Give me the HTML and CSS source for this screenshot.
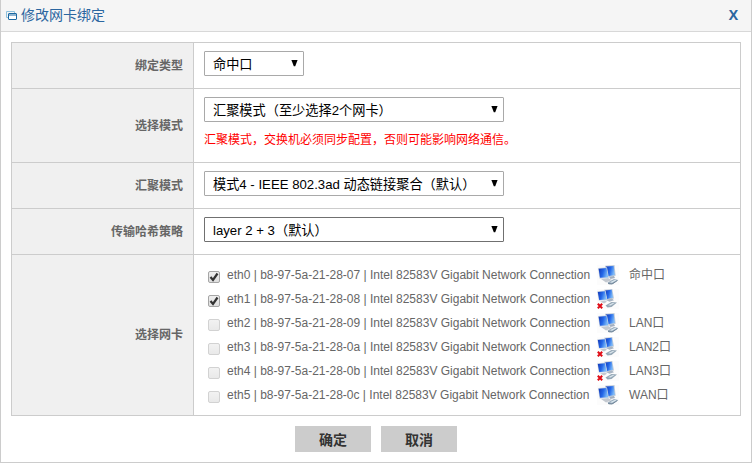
FILE: index.html
```html
<!DOCTYPE html>
<html lang="zh-CN">
<head>
<meta charset="utf-8">
<title>修改网卡绑定</title>
<link rel="stylesheet" href="styles.css">
</head>
<body>
<svg class="defs" aria-hidden="true">
  <defs>
    <linearGradient id="screen" x1="0" y1="0" x2="1" y2="0.3">
      <stop offset="0" stop-color="#1238b8"/><stop offset="0.55" stop-color="#2468e8"/><stop offset="1" stop-color="#7ab8f8"/>
    </linearGradient>
    <symbol id="pc" viewBox="0 0 22 20">
      <rect width="22" height="20" fill="#fcfcfc"/>
      <path d="M4 14l7-1 4 2-6 2.500z" fill="#c4c9d0"/>
      <path d="M8 .8l9.500-.7 1.200 10.700-8 1.500z" fill="#c3ccd8"/>
      <path d="M8.800 1.500l7.900-.6 1.100 9-7.500 1.400z" fill="url(#screen)"/>
      <path d="M1 3l9-.8 2 11-9.500.6z" fill="#cdd7e4"/>
      <path d="M1.600 3.700l7.900-.7 1.700 9.300-8.200.4z" fill="url(#screen)"/>
      <path d="M12 11.800l5-.9 1 2-4.500 1.200z" fill="#a3afbf"/>
      <path d="M10.500 17.500l6.500-3.500 4 1-5 4-4 .3z" fill="#98abbc"/>
      <path d="M13 17.200l5-2.500 1.500.5-4.500 2.500z" fill="#dbe8ef"/>
      <path d="M11 18.500l4 .5 5.500-3.500" fill="none" stroke="#6d8295" stroke-width=".9"/>
    </symbol>
    <symbol id="pc-off" viewBox="0 0 22 20">
      <rect width="22" height="20" fill="#fcfcfc"/>
      <path d="M7 .8l8.300-.7 1.700 9.400-7 1.500z" fill="#c3ccd8"/>
      <path d="M8 1.400l6.700-.6 1.300 7.900-6.200 1.200z" fill="url(#screen)"/>
      <path d="M.2 2.300l8.300-.7 1.900 9.600-8.600.6z" fill="#cdd7e4"/>
      <path d="M.8 2.900l7.200-.6 1.600 8.200-7.400.4z" fill="url(#screen)"/>
      <path d="M3 12.500l5-1 2 1.300-3 1.700z" fill="#c4c9d0"/>
      <path d="M9 11l6-1.500 2 1.700-4.500 1.500z" fill="#a9b5c4"/>
      <path d="M8.500 16.500l6-3.500 5.500.5-5.500 4.500-4 .5z" fill="#94a7b6"/>
      <path d="M11 16.200l4.500-2.200 2 .2-4 2.300z" fill="#dbe6ed"/>
      <path d="M.8 14.800l4.400 4.400M5.200 14.800l-4.400 4.400" stroke="#e00c16" stroke-width="2"/>
    </symbol>
    <symbol id="arrow" viewBox="0 0 7 8"><path d="M.4 1h6.200L4.200 7.200H2.800z" fill="#000"/></symbol>
  </defs>
</svg>
<div class="dialog">
  <header class="bar">
    <svg class="bar-icon" width="12" height="10" viewBox="0 0 12 10" fill="none">
      <path d="M8.500 2V.5h-8v6H2" stroke="#8fc1dc"/>
      <rect x="2.500" y="2.500" width="8" height="6" rx=".5" fill="#fff" stroke="#1b69a3"/>
      <path d="M2 4h9" stroke="#1b69a3"/>
    </svg>
    <h1>修改网卡绑定</h1>
    <span class="close">X</span>
  </header>
  <div class="form">
    <div class="row short"><div class="label">绑定类型</div><div class="field">
      <div class="select narrow"><span>命中口</span><svg><use href="#arrow"/></svg></div></div></div>
    <div class="row tall"><div class="label">选择模式</div><div class="field">
      <div class="select"><span>汇聚模式（至少选择2个网卡）</span><svg><use href="#arrow"/></svg></div>
      <p class="hint">汇聚模式，交换机必须同步配置，否则可能影响网络通信。</p></div></div>
    <div class="row short"><div class="label">汇聚模式</div><div class="field">
      <div class="select"><span>模式4 - IEEE 802.3ad 动态链接聚合（默认）</span><svg><use href="#arrow"/></svg></div></div></div>
    <div class="row short"><div class="label">传输哈希策略</div><div class="field">
      <div class="select dark"><span>layer 2 + 3（默认）</span><svg><use href="#arrow"/></svg></div></div></div>
    <div class="row cards"><div class="label">选择网卡</div><div class="field">
      <div class="nic"><i class="box on"><svg viewBox="0 0 12 12"><path d="M2.500 6l2.500 3L9.500 2.500"/></svg></i><span class="name">eth0 | b8-97-5a-21-28-07 | Intel 82583V Gigabit Network Connection</span><svg class="pc"><use href="#pc"/></svg><span class="port">命中口</span></div>
      <div class="nic"><i class="box on"><svg viewBox="0 0 12 12"><path d="M2.500 6l2.500 3L9.500 2.500"/></svg></i><span class="name">eth1 | b8-97-5a-21-28-08 | Intel 82583V Gigabit Network Connection</span><svg class="pc"><use href="#pc-off"/></svg></div>
      <div class="nic"><i class="box"></i><span class="name">eth2 | b8-97-5a-21-28-09 | Intel 82583V Gigabit Network Connection</span><svg class="pc"><use href="#pc"/></svg><span class="port">LAN口</span></div>
      <div class="nic"><i class="box"></i><span class="name">eth3 | b8-97-5a-21-28-0a | Intel 82583V Gigabit Network Connection</span><svg class="pc"><use href="#pc-off"/></svg><span class="port">LAN2口</span></div>
      <div class="nic"><i class="box"></i><span class="name">eth4 | b8-97-5a-21-28-0b | Intel 82583V Gigabit Network Connection</span><svg class="pc"><use href="#pc-off"/></svg><span class="port">LAN3口</span></div>
      <div class="nic"><i class="box"></i><span class="name">eth5 | b8-97-5a-21-28-0c | Intel 82583V Gigabit Network Connection</span><svg class="pc"><use href="#pc"/></svg><span class="port">WAN口</span></div>
    </div></div>
  </div>
  <footer><button>确定</button><button>取消</button></footer>
</div>
</body>
</html>
```
FILE: styles.css
```css
* { box-sizing: border-box; }
body { margin: 0; background: #fff; font: 12px/18px "Liberation Sans", "Noto Sans CJK SC", sans-serif; color: #666; overflow: hidden; }
svg { display: block; flex: none; }
.defs { width: 0; height: 0; }
.dialog { width: 752px; height: 463px; border: 1px solid #ccc; border-top: 0; }
.bar { height: 32px; display: flex; align-items: center; background: #f5f5f5; border-bottom: 1px solid #d8d8d8; padding: 0 13px 1px 5px; color: #2b66a0; }
.bar-icon { margin: 1px 3px 0 0; }
h1 { margin: 0; font-size: 14px; font-weight: 400; line-height: 20px; }
.close { margin-left: auto; font: bold 14px/20px "Open Sans", sans-serif; }
.form { width: 730px; margin: 10px 0 0 10px; border: 1px solid #ccc; }
.row { display: flex; border-bottom: 1px solid #ccc; }
.row:last-child { border-bottom: 0; }
.short { height: 46px; }
.tall { height: 74px; }
.cards { height: 160px; }
.label { width: 182px; display: flex; align-items: center; justify-content: flex-end; padding-right: 10px; background: #f0f0f0; border-right: 1px solid #ccc; font-weight: 700; }
.field { flex: 1; padding: 8px 10px 0; }
.select { width: 300px; height: 25px; display: flex; justify-content: space-between; border: 1px solid #a9a9a9; border-radius: 1px; padding: 0 5px 0 8px; color: #000; font-size: 13.2px; line-height: 26px; white-space: nowrap; }
.select svg { width: 7px; height: 8px; margin-top: 7px; }
.narrow { width: 100px; }
.dark { border-color: #707070; }
.hint { margin: 9px 0 0; color: #f00; white-space: nowrap; }
.cards .field { padding-left: 14px; }
.nic { height: 24px; display: flex; align-items: center; }
.box { width: 12px; height: 12px; margin: 3px 7px 0 0; border: 1px solid #d2d2d2; border-radius: 2px; background: linear-gradient(#f2f2f2, #e9e9e9); }
.box.on { border-color: #a5a5a5; background: linear-gradient(#efefef, #dedede); }
.box svg { width: 12px; height: 12px; margin: -1px; fill: none; stroke: #333; stroke-width: 2.2; }
.name { width: 370px; white-space: nowrap; }
.pc { width: 22px; height: 20px; }
.port { margin-left: 10px; }
footer { display: flex; gap: 10px; margin: 10px 0 0 294px; }
button { width: 76px; height: 26px; border: 0; padding: 0; background: #ccc; color: #333; font: bold 14px/26px "Noto Sans CJK SC", sans-serif; }
```
